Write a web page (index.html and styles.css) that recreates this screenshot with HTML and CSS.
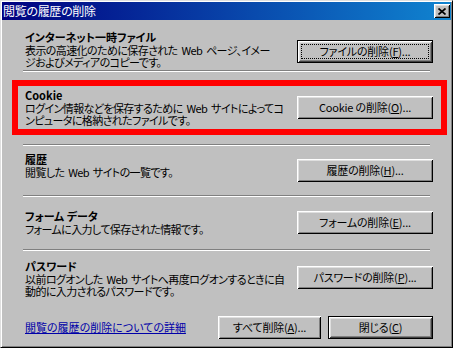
FILE: index.html
```html
<!DOCTYPE html>
<html>
<head lang="ja">
    <meta charset="UTF-8">
    <title>閲覧の履歴の削除</title>
    <link rel="stylesheet" href="styles.css">
</head>
<body>
<div class="window">
    <!-- タイトルバー -->
    <div class="titlebar">
        <span class="title">閲覧の履歴の削除</span>
        <div class="close"><svg width="8" height="7" viewBox="0 0 8 7"><path d="M0.5 0.5 L7.5 6.5 M7.5 0.5 L0.5 6.5" stroke="#000" stroke-width="1.7" fill="none"/></svg></div>
    </div>
    <div class="content">
        <div class="section s-temp">
            <div class="desc">
                <h2>インターネット一時ファイル</h2>
                <p>表示の高速化のために保存された Web ページ、イメー<br>ジおよびメディアのコピーです。</p>
            </div>
            <div class="btn default focus">ファイルの削除(<u>F</u>)...</div>
        </div>
        <div class="sep"></div>
        <div class="section s-cookie">
            <div class="mark">
                <div class="desc">
                    <h2>Cookie</h2>
                    <p>ログイン情報などを保存するために Web サイトによってコ<br>ンピュータに格納されたファイルです。</p>
                </div>
                <div class="btn">Cookie の削除(<u>O</u>)...</div>
            </div>
        </div>
        <div class="sep"></div>
        <div class="section s-history">
            <div class="desc">
                <h2>履歴</h2>
                <p>閲覧した Web サイトの一覧です。</p>
            </div>
            <div class="btn">履歴の削除(<u>H</u>)...</div>
        </div>
        <div class="sep"></div>
        <div class="section s-form">
            <div class="desc">
                <h2>フォーム データ</h2>
                <p>フォームに入力して保存された情報です。</p>
            </div>
            <div class="btn">フォームの削除(<u>E</u>)...</div>
        </div>
        <div class="sep"></div>
        <div class="section s-pass">
            <div class="desc">
                <h2>パスワード</h2>
                <p>以前ログオンした Web サイトへ再度ログオンするときに自<br>動的に入力されるパスワードです。</p>
            </div>
            <div class="btn">パスワードの削除(<u>P</u>)...</div>
        </div>
        <!-- 下部ボタン -->
        <div class="footer">
            <a class="link" href="#">閲覧の履歴の削除についての詳細</a>
            <div class="actions">
                <div class="btn btn-all">すべて削除(<u>A</u>)...</div>
                <div class="btn btn-close default">閉じる(<u>C</u>)</div>
            </div>
        </div>
    </div>
</div>
</body>
</html>
```

FILE: styles.css
```css
*{ margin:0; padding:0; box-sizing:border-box; }
body{ background:#c0c0c0; color:#000; font:11px/13px "Noto Sans CJK JP", "Noto Sans CJK SC", sans-serif; font-feature-settings:"palt"; letter-spacing:-0.2px; }
.window{ width:453px; height:348px; border:1px solid; border-color:#dfdfdf #000 #000 #dfdfdf; box-shadow:inset 1px 1px #fff, inset -1px -1px #808080; padding:1px; background:#c0c0c0; }
.titlebar{ height:18px; display:flex; align-items:center; justify-content:space-between; padding:0 1px 0 1px; background:linear-gradient(to right, #000080, #1084d0); color:#fff; }
.title{ font-size:12px; line-height:14px; letter-spacing:-0.3px; }
.close{ width:16px; height:14px; display:flex; align-items:center; justify-content:center; background:#c0c0c0; box-shadow:inset 1px 1px #fff, inset -1px -1px #000, inset 2px 2px #dfdfdf, inset -2px -2px #808080; }
.close svg{ display:block; }
.content{ padding:0 18px 0 21px; }
.section{ display:flex; justify-content:space-between; align-items:flex-start; }
.desc{ flex:1; min-width:0; padding-left:2px; white-space:nowrap; }
.desc h2{ font-size:11px; line-height:14px; font-weight:bold; letter-spacing:0; }
.desc p{ line-height:12px; letter-spacing:-0.6px; word-spacing:2px; }
.sep{ height:2px; margin-right:3px; border-top:1px solid #808080; border-bottom:1px solid #fff; }
.btn{ position:relative; flex-shrink:0; width:136px; height:23px; display:flex; align-items:center; justify-content:center; background:#c0c0c0; white-space:nowrap; box-shadow:inset 1px 1px #fff, inset -1px -1px #000, inset 2px 2px #dfdfdf, inset -2px -2px #808080; cursor:default; }
.btn.default{ border:1px solid #000; box-shadow:inset 1px 1px #fff, inset -1px -1px #404040, inset 2px 2px #dfdfdf, inset -2px -2px #808080; }
.btn.focus:after{ content:""; position:absolute; left:3px; top:3px; right:3px; bottom:3px; border:1px dotted #000; }
.btn u{ text-decoration:underline; }
.s-temp{ height:50px; padding-top:10px; }
.s-temp .btn{ margin-top:10px; }
.s-cookie{ height:64px; display:block; }
.mark{ display:flex; justify-content:space-between; align-items:flex-start; margin:8px -14px 0 -11px; height:55px; border:6px solid #ff0000; padding:2px 8px 0 5px; }
.mark .btn{ margin-top:8px; }
.s-history{ height:49px; padding-top:6px; }
.s-history .btn{ margin-top:7px; }
.s-form{ height:52px; padding-top:12px; }
.s-form .btn{ margin-top:2px; }
.s-pass{ height:57px; padding-top:8px; }
.s-pass .btn{ margin-top:7px; }
.footer{ display:flex; align-items:center; padding-top:8px; }
.link{ margin-left:2px; color:#0000a8; text-decoration:underline; letter-spacing:0; }
.actions{ display:flex; gap:7px; margin-left:auto; }
.btn-all{ width:103px; }
.btn-close{ width:105px; }
```
